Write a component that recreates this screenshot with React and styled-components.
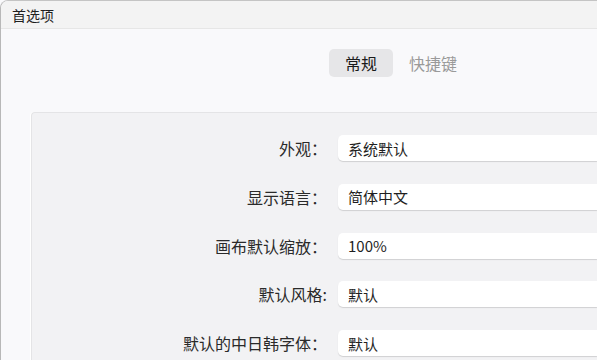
import React from 'react'
import styled, { createGlobalStyle } from 'styled-components'

const GlobalStyle = createGlobalStyle`
  html, body {
    margin: 0;
    padding: 0;
    width: 597px;
    height: 360px;
    overflow: hidden;
    background: #f9f9fb;
  }
  body {
    font-family: "Noto Sans CJK SC", "Noto Sans", sans-serif;
  }
`

const rows = [
  { label: '外观：', value: '系统默认' },
  { label: '显示语言：', value: '简体中文' },
  { label: '画布默认缩放：', value: '100%' },
  { label: '默认风格:', value: '默认' },
  { label: '默认的中日韩字体：', value: '默认' },
]

const App = () => {
  return (
    <>
      <GlobalStyle />
      <Window>
        <TitleBar>首选项</TitleBar>
        <Body>
          <Tabs>
            <Tab active>常规</Tab>
            <Tab>快捷键</Tab>
          </Tabs>
          <Panel>
            <Form>
              {rows.map(r => (
                <React.Fragment key={r.label}>
                  <Label>{r.label}</Label>
                  <Field>{r.value}</Field>
                </React.Fragment>
              ))}
            </Form>
          </Panel>
        </Body>
      </Window>
    </>
  )
}

export default App

const Window = styled.div`
  width: 597px;
  height: 360px;
  box-sizing: border-box;
  border-top: 1px solid #c4c4c4;
  border-left: 1px solid #b8b8b8;
  border-top-left-radius: 8px;
  background: #f9f9fb;
  overflow: hidden;
  display: flex;
  flex-direction: column;
`

const TitleBar = styled.div`
  height: 28px;
  flex-shrink: 0;
  box-sizing: border-box;
  background: #f3f3f3;
  border-bottom: 1px solid #e6e6e6;
  padding-left: 11px;
  display: flex;
  align-items: center;
  font-size: 14px;
  color: #1f1f1f;
`

const Body = styled.div`
  flex: 1;
  min-height: 0;
  display: flex;
  flex-direction: column;
  padding: 20px 0 0 30px;
`

const Tabs = styled.div`
  display: flex;
  padding-left: 298px;
  margin-bottom: 35px;
`

const Tab = styled.div`
  height: 28px;
  padding: 0 16px;
  display: flex;
  align-items: center;
  border-radius: 5px;
  font-size: 16px;
  color: ${p => (p.active ? '#1a1a1a' : '#9a9a9a')};
  background: ${p => (p.active ? '#e6e6e8' : 'transparent')};
`

const Panel = styled.div`
  flex: 1;
  min-height: 0;
  background: #f2f2f4;
  border-top: 1px solid #e4e4e6;
  border-left: 1px solid #e4e4e6;
  border-top-left-radius: 4px;
  padding-top: 22px;
  box-shadow: -1px 0 0 #ffffff;
`

const Form = styled.div`
  display: grid;
  grid-template-columns: 295px 1fr;
  grid-auto-rows: 26px;
  column-gap: 11px;
  row-gap: 22.75px;
`

const Label = styled.div`
  display: flex;
  align-items: center;
  justify-content: flex-end;
  font-size: 16px;
  color: #2a2a2a;
`

const Field = styled.div`
  display: flex;
  align-items: center;
  padding-left: 10px;
  background: #ffffff;
  border-radius: 5px 0 0 5px;
  box-shadow: 0 1px 1px rgba(0, 0, 0, 0.14);
  font-size: 15px;
  color: #1f1f1f;
`
